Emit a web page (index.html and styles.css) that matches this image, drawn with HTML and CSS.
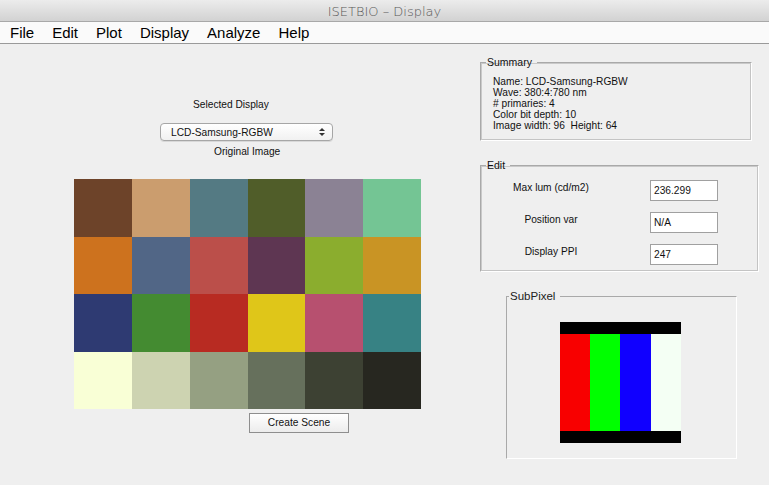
FILE: index.html
```html
<!DOCTYPE html>
<html>
<head>
<meta charset="utf-8">
<title>ISETBIO - Display</title>
<link rel="stylesheet" href="styles.css">
</head>
<body>
<div class="titlebar">ISETBIO – Display</div>
<div class="menubar">
  <span class="menu">File</span>
  <span class="menu">Edit</span>
  <span class="menu">Plot</span>
  <span class="menu">Display</span>
  <span class="menu">Analyze</span>
  <span class="menu">Help</span>
</div>
<div class="main">
  <div class="left">
    <div class="sel-label">Selected Display</div>
    <div class="popup">
      <span>LCD-Samsung-RGBW</span>
      <span class="arrows"><span class="up"></span><span class="down"></span></span>
    </div>
    <div class="orig-label">Original Image</div>
    <div class="chart">
      <div style="background:#6d4329"></div>
      <div style="background:#cb9d6e"></div>
      <div style="background:#547a83"></div>
      <div style="background:#505d29"></div>
      <div style="background:#8b8294"></div>
      <div style="background:#74c594"></div>
      <div style="background:#cd721e"></div>
      <div style="background:#516686"></div>
      <div style="background:#bb4f4a"></div>
      <div style="background:#5e3652"></div>
      <div style="background:#8bad2e"></div>
      <div style="background:#c99424"></div>
      <div style="background:#2e3a72"></div>
      <div style="background:#448b31"></div>
      <div style="background:#b82b22"></div>
      <div style="background:#dfc619"></div>
      <div style="background:#b7506f"></div>
      <div style="background:#378284"></div>
      <div style="background:#f9ffd6"></div>
      <div style="background:#cdd3b1"></div>
      <div style="background:#95a082"></div>
      <div style="background:#66705c"></div>
      <div style="background:#3d4133"></div>
      <div style="background:#272720"></div>
    </div>
    <div class="btn">Create Scene</div>
  </div>
  <div class="right">
    <fieldset class="panel summary">
      <legend>Summary</legend>
      <div class="sum-body">
        <div>Name: LCD-Samsung-RGBW</div>
        <div>Wave: 380:4:780 nm</div>
        <div># primaries: 4</div>
        <div>Color bit depth: 10</div>
        <div>Image width: 96&nbsp; Height: 64</div>
      </div>
    </fieldset>
    <fieldset class="panel edit">
      <legend>Edit</legend>
      <div class="row"><span class="lbl">Max lum (cd/m2)</span><span class="field">236.299</span></div>
      <div class="row"><span class="lbl">Position var</span><span class="field">N/A</span></div>
      <div class="row"><span class="lbl">Display PPI</span><span class="field">247</span></div>
    </fieldset>
    <fieldset class="panel subpixel">
      <legend>SubPixel</legend>
      <div class="sp">
        <div class="sp-bar"></div>
        <div class="sp-stripes">
          <div class="r"></div><div class="g"></div><div class="b"></div><div class="w"></div>
        </div>
        <div class="sp-bar"></div>
      </div>
    </fieldset>
  </div>
</div>
</body>
</html>
```
FILE: styles.css
```css
html, body {
  margin: 0;
  padding: 0;
}
body {
  width: 769px;
  height: 485px;
  background: #efefef;
  font-family: "Liberation Sans", Arial, sans-serif;
  font-size: 10.2px;
  color: #111;
  overflow: hidden;
}
.titlebar {
  height: 22px;
  line-height: 23px;
  text-align: center;
  font-family: "DejaVu Sans", sans-serif;
  font-weight: 300;
  font-size: 13px;
  color: #5a5a5a;
  background: linear-gradient(#ececec, #d2d2d2);
  border-bottom: 1px solid #a8a8a8;
  box-sizing: border-box;
}
.menubar {
  height: 22px;
  display: flex;
  align-items: center;
  padding-left: 10px;
  background: #fafafa;
  border-bottom: 1px solid #9a9a9a;
  box-sizing: border-box;
  font-size: 15px;
  color: #000;
}
.menu {
  margin-right: 18px;
}
.main {
  display: flex;
}
.left {
  width: 480px;
  display: flex;
  flex-direction: column;
  align-items: flex-start;
}
.sel-label {
  margin: 54px 0 0 193px;
  line-height: 13px;
}
.popup {
  margin: 12px 0 0 160px;
  width: 173px;
  height: 18px;
  box-sizing: border-box;
  border: 1px solid #a6a6a6;
  border-radius: 4px;
  background: linear-gradient(#ffffff, #f1f1f1);
  display: flex;
  align-items: center;
  justify-content: space-between;
  padding: 0 7px 0 10px;
  box-shadow: 0 1px 0 #d8d8d8;
}
.arrows {
  display: flex;
  flex-direction: column;
  gap: 2px;
}
.up, .down {
  width: 0;
  height: 0;
  border-left: 3px solid transparent;
  border-right: 3px solid transparent;
}
.up { border-bottom: 3px solid #333; }
.down { border-top: 3px solid #333; }
.orig-label {
  margin: 4px 0 0 214px;
  line-height: 13px;
}
.chart {
  margin: 21px 0 0 74px;
  width: 347px;
  height: 230px;
  display: grid;
  grid-template-columns: 58px 58px 58px 57px 58px 58px;
  grid-template-rows: 58px 57px 58px 57px;
}
.btn {
  margin: 4px 0 0 249px;
  width: 100px;
  height: 20px;
  box-sizing: border-box;
  border: 1px solid #8e8e8e;
  background: linear-gradient(#ffffff, #ececec);
  text-align: center;
  line-height: 18px;
}
.right {
  width: 289px;
  display: flex;
  flex-direction: column;
  align-items: flex-start;
}
.panel {
  margin: 0;
  padding: 0;
  border: 1px solid;
  border-color: #a9a9a9 #ffffff #ffffff #a9a9a9;
  box-shadow: 1px 1px 0 #c9c9c9 inset, -1px -1px 0 #c4c4c4 inset;
  box-sizing: border-box;
  min-width: 0;
}
.panel legend {
  padding: 0 5px 0 1px;
  margin-left: 5px;
  line-height: 13px;
  font-size: 10.5px;
}
.summary {
  margin-top: 12px;
  width: 272px;
  height: 85px;
}
.sum-body {
  padding: 7px 0 0 12px;
  line-height: 11px;
}
.edit {
  margin-top: 18px;
  width: 279px;
  height: 113px;
  padding: 8px 0 0 0;
}
.row {
  display: flex;
  align-items: center;
  margin-bottom: 11px;
}
.lbl {
  width: 140px;
  text-align: center;
  margin-top: -6px;
}
.field {
  margin-left: 29px;
  width: 68px;
  height: 21px;
  box-sizing: border-box;
  border: 1px solid #a0a0a0;
  background: #fff;
  padding-left: 3px;
  line-height: 19px;
}
.subpixel {
  margin: 18px 0 0 26px;
  width: 231px;
  height: 169px;
  padding: 0;
  box-shadow: none;
  border-color: #a9a9a9 #ffffff #ffffff #a9a9a9;
  border-width: 1px;
}
.subpixel legend {
  font-size: 11.5px;
  color: #222;
  margin-left: 2px;
}
.sp {
  margin: 19px 0 0 53px;
  width: 121px;
}
.sp-bar {
  height: 12px;
  background: #000;
}
.sp-stripes {
  display: flex;
  height: 97px;
}
.sp-stripes div { height: 100%; }
.r { width: 30px; background: #f80000; }
.g { width: 30px; background: #00ff00; }
.b { width: 31px; background: #1000ff; }
.w { width: 30px; background: #f4fff4; }
```
